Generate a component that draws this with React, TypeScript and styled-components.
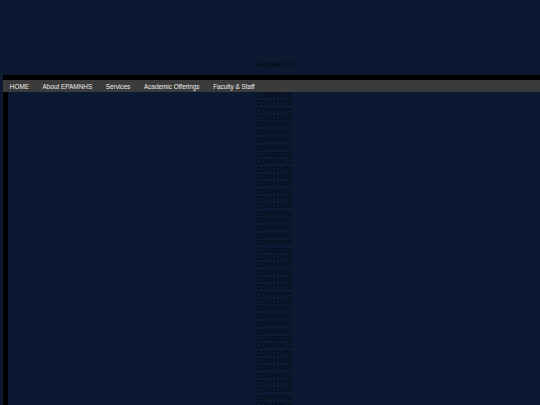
import React from "react";
import styled, { createGlobalStyle } from "styled-components";

const Global = createGlobalStyle`
  html, body {
    margin: 0;
    padding: 0;
    background: #0b1a32;
    overflow: hidden;
  }
  body {
    font-family: "Liberation Sans", Arial, sans-serif;
  }
`;

const Page = styled.div`
  padding-left: 3px;
  width: 537px;
`;

const Header = styled.header`
  height: 75px;
  box-sizing: border-box;
  padding: 0 0 7px 5px;
  display: flex;
  align-items: flex-end;
  justify-content: center;
`;

const HeaderTitle = styled.div`
  font-size: 6.6px;
  line-height: 7.36px;
  color: #03070e;
`;

const Rule = styled.div`
  height: 5px;
  background: #000;
`;

const Nav = styled.nav`
  height: 12px;
  background: #3b3b3b;
  display: flex;
  align-items: center;
  padding-top: 1px;
  box-sizing: border-box;
`;

const NavItem = styled.a`
  padding: 0 6.8px;
  font-size: 6.4px;
  line-height: 7.36px;
  color: #ececec;
  text-decoration: none;
  white-space: nowrap;
`;

const Main = styled.main`
  border-left: 5px solid #000;
  height: 313px;
  overflow: hidden;
  text-align: center;
`;

const Line = styled.div`
  font-size: 6.6px;
  line-height: 7.36px;
  color: #03070e;
`;

const navItems = ["HOME", "About EPAMNHS", "Services", "Academic Offerings", "Faculty & Staff"];

export default function App() {
  return (
    <>
      <Global />
      <Page>
        <Header>
          <HeaderTitle>HEADER KO</HeaderTitle>
        </Header>
        <Rule />
        <Nav>
          {navItems.map((n) => (
            <NavItem key={n} href="#">
              {n}
            </NavItem>
          ))}
        </Nav>
        <Main>
          {Array.from({ length: 43 }, (_, i) => (
            <Line key={i}>CONTENTS</Line>
          ))}
        </Main>
      </Page>
    </>
  );
}
